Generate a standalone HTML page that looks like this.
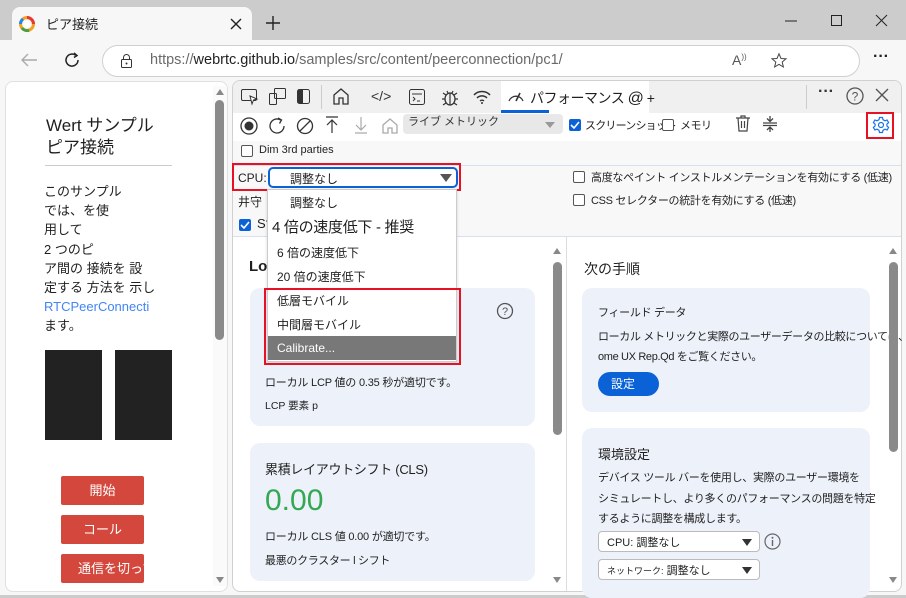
<!DOCTYPE html>
<html><head><meta charset="utf-8"><style>
*{box-sizing:border-box;margin:0;padding:0}
body{width:906px;height:595px;overflow:hidden;background:#cccccc;font-family:"Liberation Sans","Noto Sans CJK JP",sans-serif;font-size:12px;color:#1f1f1f;position:relative}
.a{position:absolute}
.t{white-space:nowrap}
svg{position:absolute;overflow:visible}
.cb{position:absolute;width:12px;height:12px;border:1px solid #555;border-radius:2px;background:#fff}
.cbc{position:absolute;width:12px;height:12px;border-radius:2px;background:#0b62d6}
.red{position:absolute;border:2px solid #e81123}
.card{position:absolute;background:#edf2fa;border-radius:10px}
.btn{position:absolute;background:#d4473c;color:#fff;border-radius:2px;text-align:center;font-size:13px;line-height:30px}
</style></head><body>
<div class="a" style="left:12px;top:7px;width:240px;height:34px;background:#f7f7f7;border-radius:8px 8px 0 0"></div>
<svg style="left:19px;top:16px" width="16" height="16" viewBox="0 0 16 16"><circle cx="8" cy="8" r="6.5" fill="none" stroke="#f4a020" stroke-width="3"/><path d="M8 1.5A6.5 6.5 0 0 1 14.5 8" stroke="#e53935" stroke-width="3" fill="none"/><path d="M3 12A6.5 6.5 0 0 0 10 14.3" stroke="#43a047" stroke-width="3" fill="none"/><path d="M1.5 8A6.5 6.5 0 0 1 4 3" stroke="#1e88e5" stroke-width="3" fill="none"/><circle cx="8" cy="8" r="3" fill="#fff"/></svg>
<div class="a t" style="left:46px;top:14px;font-size:13px">ピア接続</div>
<svg style="left:231px;top:19px" width="10" height="10"><path d="M0 0L10 10M10 0L0 10" stroke="#222" stroke-width="1.4"/></svg>
<svg style="left:266px;top:16px" width="14" height="14"><path d="M7 0V14M0 7H14" stroke="#222" stroke-width="1.4"/></svg>
<svg style="left:785px;top:20px" width="12" height="2"><path d="M0 1H12" stroke="#222"/></svg>
<svg style="left:831px;top:15px" width="11" height="11"><rect x=".5" y=".5" width="10" height="10" fill="none" stroke="#222"/></svg>
<svg style="left:876px;top:15px" width="11" height="11"><path d="M0 0L11 11M11 0L0 11" stroke="#222"/></svg>
<div class="a" style="left:0;top:40px;width:906px;height:40px;background:#f7f7f7"></div>
<svg style="left:20px;top:53px" width="18" height="14"><path d="M17 7H2M8 1L2 7L8 13" stroke="#aaa" stroke-width="1.4" fill="none"/></svg>
<svg style="left:64px;top:52px" width="16" height="16" viewBox="0 0 16 16"><path d="M14 8A6 6 0 1 1 11.5 3.2" stroke="#222" stroke-width="1.5" fill="none"/><path d="M10 1L13 3.5L10 5.5" stroke="#222" stroke-width="1.5" fill="none"/></svg>
<div class="a" style="left:102px;top:45px;width:758px;height:32px;background:#fff;border:1px solid #d0d0d0;border-radius:16px"></div>
<svg style="left:121px;top:54px" width="11" height="14"><rect x=".5" y="5.5" width="10" height="8" rx="1" fill="none" stroke="#333"/><path d="M2.5 5.5V3.5a3 3 0 0 1 6 0V5.5" fill="none" stroke="#333"/><circle cx="5.5" cy="9.5" r="1" fill="#333"/></svg>
<div class="a t" style="left:150px;top:52px;font-size:14.5px;color:#222"><span style="color:#6a6a6a">https://</span>webrtc.github.io<span style="color:#6a6a6a">/samples/src/content/peerconnection/pc1/</span></div>
<div class="a t" style="left:732px;top:52px;font-size:14px;color:#555">A<sup style="font-size:8px">))</sup></div>
<svg style="left:771px;top:53px" width="16" height="15" viewBox="0 0 16 15"><path d="M8 .8L10 5.5L15 5.8L11.2 9L12.4 14L8 11.3L3.6 14L4.8 9L1 5.8L6 5.5Z" fill="none" stroke="#444"/></svg>
<div class="a t" style="left:873px;top:48px;font-size:16px;font-weight:bold;color:#222">···</div>
<div class="a" style="left:0;top:80px;width:906px;height:515px;background:#f7f7f7"></div>
<div class="a" style="left:5px;top:81px;width:223px;height:511px;background:#fff;border:1px solid #e0e0e0;border-radius:8px"></div>
<div class="a" style="left:213px;top:86px;width:14px;height:500px;background:#fafafa"></div>
<svg style="left:215px;top:88px" width="10" height="8"><path d="M5 1L9 7H1Z" fill="#888"/></svg>
<div class="a" style="left:215px;top:100px;width:9px;height:240px;background:#8a8a8a;border-radius:5px"></div>
<svg style="left:215px;top:576px" width="10" height="8"><path d="M5 7L9 1H1Z" fill="#888"/></svg>
<div class="a t" style="left:46px;top:115px;font-size:17px;line-height:22px">Wert サンプル<br>ピア接続</div>
<div class="a" style="left:45px;top:165px;width:127px;height:1px;background:#ccc"></div>
<div class="a t" style="left:44px;top:182px;font-size:13px;line-height:19.2px">このサンプル<br>では、を使<br>用して<br>2 つのピ<br>ア間の 接続を 設<br>定する 方法を 示し<br><span style="color:#4285f4">RTCPeerConnecti</span><br>ます。</div>
<div class="a" style="left:45px;top:350px;width:57px;height:90px;background:#222"></div>
<div class="a" style="left:115px;top:350px;width:57px;height:90px;background:#222"></div>
<div class="btn" style="left:61px;top:476px;width:83px;height:29px">開始</div>
<div class="btn" style="left:61px;top:515px;width:83px;height:29px">コール</div>
<div class="btn t" style="left:61px;top:554px;width:83px;height:29px;overflow:hidden;text-align:left;padding-left:17px">通信を切ってく</div>
<div class="a" style="left:232px;top:80px;width:670px;height:512px;background:#fff;border:1px solid #d0d0d0;border-radius:8px;overflow:hidden">
 <div class="a" style="left:0;top:0;width:670px;height:32px;background:#f0f0f0"></div>
 <div class="a" style="left:0;top:60px;width:670px;height:96px;background:#f8f8f8"></div>
 <div class="a" style="left:0;top:84px;width:670px;height:1px;background:#d5e0f0"></div>
 <div class="a" style="left:0;top:155px;width:670px;height:1px;background:#d5e0f0"></div>
 <div class="a" style="left:333px;top:156px;width:1px;height:360px;background:#ddd"></div>
 <div class="a" style="left:268px;top:0;width:148px;height:32px;background:#fff"></div>
 <div class="a" style="left:268px;top:29px;width:48px;height:3px;background:#0b62d6"></div>
 <div class="a" style="left:88px;top:4px;width:1px;height:24px;background:#ccc"></div>
 <div class="a" style="left:573px;top:4px;width:1px;height:24px;background:#ccc"></div>
</div>
<svg style="left:241px;top:89px" width="18" height="16"><rect x=".5" y=".5" width="15" height="11" rx="1.5" fill="none" stroke="#333"/><path d="M9 7L16 10L12.5 11L11 15Z" fill="#fff" stroke="#333"/></svg>
<svg style="left:269px;top:88px" width="18" height="18"><rect x=".5" y="5.5" width="7" height="11" rx="1" fill="none" stroke="#333"/><rect x="5.5" y=".5" width="11" height="10" rx="1" fill="none" stroke="#333"/></svg>
<svg style="left:297px;top:89px" width="14" height="16"><rect x=".5" y=".5" width="12" height="14" rx="2" fill="none" stroke="#333"/><rect x="1" y="1" width="5" height="13" fill="#333"/></svg>
<svg style="left:333px;top:88px" width="16" height="17"><path d="M1 7L8 1L15 7V16H10V10H6V16H1Z" fill="none" stroke="#333" stroke-width="1.3"/></svg>
<div class="a t" style="left:371px;top:88px;font-size:14px;color:#333">&lt;/&gt;</div>
<svg style="left:409px;top:89px" width="16" height="16"><rect x=".5" y=".5" width="15" height="15" rx="2" fill="none" stroke="#333"/><path d="M3 5H13M4 8L6 10L4 12M8 12H11" stroke="#333" fill="none"/></svg>
<svg style="left:441px;top:88px" width="18" height="18"><ellipse cx="9" cy="11" rx="5" ry="6" fill="none" stroke="#333" stroke-width="1.3"/><path d="M9 5V17M4 11H1M14 11H17M5 7L2 5M13 7L16 5M5 15L2 17M13 15L16 17M6 3L7 5M12 3L11 5" stroke="#333" stroke-width="1.2"/></svg>
<svg style="left:473px;top:90px" width="18" height="14"><path d="M1 5A11 11 0 0 1 17 5M4 8A7 7 0 0 1 14 8M7 11A3 3 0 0 1 11 11" fill="none" stroke="#333" stroke-width="1.5"/><circle cx="9" cy="13" r="1" fill="#333"/></svg>
<svg style="left:507px;top:89px" width="18" height="14"><path d="M2 12A7.5 7.5 0 0 1 16 12" fill="none" stroke="#333" stroke-width="1.3"/><path d="M9 12L13 4" stroke="#333" stroke-width="1.6"/></svg>
<div class="a t" style="left:530px;top:88px;font-size:14px;letter-spacing:-0.5px;color:#1f1f1f">パフォーマンス <span style="font-size:16px">@</span> +</div>
<div class="a t" style="left:818px;top:83px;font-size:16px;font-weight:bold;color:#333">···</div>
<svg style="left:846px;top:87px" width="18" height="18"><circle cx="9" cy="9" r="8" fill="none" stroke="#555" stroke-width="1.3"/><text x="9" y="13.5" font-size="12" text-anchor="middle" fill="#555" font-family="Liberation Sans">?</text></svg>
<svg style="left:875px;top:88px" width="14" height="14"><path d="M1 1L13 13M13 1L1 13" stroke="#555" stroke-width="1.4"/></svg>
<svg style="left:240px;top:117px" width="18" height="18"><circle cx="9" cy="9" r="8" fill="none" stroke="#333" stroke-width="1.3"/><circle cx="9" cy="9" r="4.5" fill="#333"/></svg>
<svg style="left:268px;top:117px" width="18" height="18"><path d="M16 9A7 7 0 1 1 12.5 2.9" fill="none" stroke="#333" stroke-width="1.3"/><path d="M10 1L13.5 3L11.5 6.5" fill="none" stroke="#333" stroke-width="1.3"/></svg>
<svg style="left:296px;top:117px" width="18" height="18"><circle cx="9" cy="9" r="7.5" fill="none" stroke="#333" stroke-width="1.3"/><path d="M4 14L14 4" stroke="#333" stroke-width="1.3"/></svg>
<svg style="left:325px;top:116px" width="14" height="18"><path d="M1 1H13M7 4V17M2 9L7 4L12 9" fill="none" stroke="#333" stroke-width="1.2"/></svg>
<svg style="left:354px;top:116px" width="14" height="18"><path d="M1 17H13M7 1V14M2 9L7 14L12 9" fill="none" stroke="#aaa" stroke-width="1.2"/></svg>
<svg style="left:382px;top:118px" width="16" height="16"><path d="M1 7L8 1L15 7V15H10V10H6V15H1Z" fill="none" stroke="#aaa" stroke-width="1.3"/></svg>
<div class="a" style="left:403px;top:114px;width:160px;height:20px;background:#e8e8e8;border-radius:4px"></div>
<div class="a t" style="left:408px;top:113px;font-size:11px;color:#333">ライブ メトリック</div>
<svg style="left:545px;top:122px" width="10" height="7"><path d="M0 0H10L5 6Z" fill="#999"/></svg>
<div class="cbc" style="left:569px;top:119px"></div>
<svg style="left:571px;top:121px" width="8" height="8"><path d="M0 4L3 7L8 1" stroke="#fff" stroke-width="1.6" fill="none"/></svg>
<div class="a t" style="left:585px;top:117px;font-size:11px;letter-spacing:-0.8px">スクリーンショット</div>
<div class="cb" style="left:662px;top:119px"></div>
<div class="a t" style="left:680px;top:117px;font-size:11px;letter-spacing:-0.5px">メモリ</div>
<svg style="left:735px;top:115px" width="16" height="18"><path d="M1 3H15M6 3V1H10V3M3 3L4 16H12L13 3M6.5 6V13M9.5 6V13" fill="none" stroke="#444" stroke-width="1.2"/></svg>
<svg style="left:763px;top:115px" width="14" height="18"><path d="M0 8H14M0 10.5H14M7 1V6M4 3.5L7 6.5L10 3.5M7 17V12.5M4 15L7 12L10 15" fill="none" stroke="#444" stroke-width="1.3"/></svg>
<svg style="left:872px;top:116px" width="18" height="18" viewBox="0 0 18 18"><path d="M7.5 1.5H10.5L11 3.7L13 4.8L15.1 4L16.6 6.6L14.9 8.1V9.9L16.6 11.4L15.1 14L13 13.2L11 14.3L10.5 16.5H7.5L7 14.3L5 13.2L2.9 14L1.4 11.4L3.1 9.9V8.1L1.4 6.6L2.9 4L5 4.8L7 3.7Z" fill="none" stroke="#1a73e8" stroke-width="1.2"/><circle cx="9" cy="9" r="2.5" fill="none" stroke="#1a73e8" stroke-width="1.2"/></svg>
<div class="red" style="left:866px;top:112px;width:28px;height:27px"></div>
<div class="cb" style="left:241px;top:145px"></div>
<div class="a t" style="left:259px;top:144px;font-size:11px">Dim 3rd parties</div>
<div class="a t" style="left:238px;top:171px;font-size:12px">CPU:</div>
<div class="a" style="left:268px;top:167px;width:190px;height:21px;border:2px solid #0b62d6;border-radius:5px;background:#fff"></div>
<div class="a t" style="left:290px;top:170px;font-size:12px">調整なし</div>
<svg style="left:440px;top:174px" width="12" height="8"><path d="M0 0H12L6 8Z" fill="#555"/></svg>
<div class="red" style="left:232px;top:163px;width:229px;height:28px"></div>
<div class="a t" style="left:238px;top:193px;font-size:12px">井守</div>
<div class="cbc" style="left:239px;top:219px"></div>
<svg style="left:241px;top:221px" width="8" height="8"><path d="M0 4L3 7L8 1" stroke="#fff" stroke-width="1.6" fill="none"/></svg>
<div class="a t" style="left:257px;top:216px;font-size:13px">S?</div>
<div class="cb" style="left:573px;top:171px"></div>
<div class="a t" style="left:591px;top:169px;font-size:11px;letter-spacing:-0.3px">高度なペイント インストルメンテーションを有効にする (低速)</div>
<div class="cb" style="left:573px;top:194px"></div>
<div class="a t" style="left:591px;top:192px;font-size:11px;letter-spacing:-0.3px">CSS セレクターの統計を有効にする (低速)</div>
<div class="a t" style="left:249px;top:258px;font-size:15px;font-weight:bold">Lo</div>
<div class="card" style="left:250px;top:288px;width:285px;height:138px"></div>
<svg style="left:496px;top:302px" width="18" height="18"><circle cx="9" cy="9" r="7.5" fill="none" stroke="#555" stroke-width="1.3"/><text x="9" y="13" font-size="11" text-anchor="middle" fill="#555" font-family="Liberation Sans">?</text></svg>
<div class="a t" style="left:265px;top:374px;font-size:11px;letter-spacing:-0.2px">ローカル LCP 値の 0.35 秒が適切です。</div>
<div class="a t" style="left:265px;top:398px;font-size:10.5px">LCP 要素 p</div>
<div class="card" style="left:250px;top:443px;width:285px;height:138px"></div>
<div class="a t" style="left:265px;top:459px;font-size:13px;letter-spacing:-0.3px">累積レイアウトシフト (CLS)</div>
<div class="a t" style="left:265px;top:484px;font-size:30px;color:#34a853">0.00</div>
<div class="a t" style="left:265px;top:528px;font-size:11px;letter-spacing:-0.2px">ローカル CLS 値 0.00 が適切です。</div>
<div class="a t" style="left:265px;top:552px;font-size:11px;letter-spacing:-0.3px">最悪のクラスター l シフト</div>
<svg style="left:552px;top:247px" width="10" height="8"><path d="M5 1L9 7H1Z" fill="#888"/></svg>
<div class="a" style="left:553px;top:262px;width:9px;height:173px;background:#8a8a8a;border-radius:5px"></div>
<svg style="left:552px;top:576px" width="10" height="8"><path d="M5 7L9 1H1Z" fill="#888"/></svg>
<div class="a t" style="left:584px;top:259px;font-size:14px">次の手順</div>
<div class="card" style="left:582px;top:288px;width:288px;height:124px"></div>
<div class="a t" style="left:598px;top:304px;font-size:11px;letter-spacing:-0.3px">フィールド データ</div>
<div class="a t" style="left:598px;top:327px;font-size:11px;line-height:20px;letter-spacing:-0.35px">ローカル メトリックと実際のユーザーデータの比較については、Chr<br>ome UX Rep.Qd をご覧ください。</div>
<div class="a" style="left:598px;top:372px;width:61px;height:24px;background:#0b62d6;border-radius:12px;color:#fff;font-size:12px;line-height:24px;padding-left:13px">設定</div>
<div class="card" style="left:582px;top:428px;width:288px;height:170px"></div>
<div class="a t" style="left:598px;top:444px;font-size:13px">環境設定</div>
<div class="a t" style="left:598px;top:468px;font-size:11px;line-height:20.5px;letter-spacing:-0.3px">デバイス ツール バーを使用し、実際のユーザー環境を<br>シミュレートし、より多くのパフォーマンスの問題を特定<br>するように調整を構成します。</div>
<div class="a" style="left:598px;top:531px;width:162px;height:21px;background:#fff;border:1px solid #bbb;border-radius:4px"></div>
<div class="a t" style="left:607px;top:534px;font-size:11px">CPU: 調整なし</div>
<svg style="left:742px;top:539px" width="10" height="7"><path d="M0 0H10L5 7Z" fill="#333"/></svg>
<svg style="left:764px;top:533px" width="17" height="17"><circle cx="8.5" cy="8.5" r="7.5" fill="none" stroke="#666" stroke-width="1.2"/><path d="M8.5 7V13" stroke="#666" stroke-width="1.4"/><circle cx="8.5" cy="4.7" r="1" fill="#666"/></svg>
<div class="a" style="left:598px;top:559px;width:162px;height:21px;background:#fff;border:1px solid #bbb;border-radius:4px"></div>
<div class="a t" style="left:607px;top:562px;font-size:11px"><span style="font-size:9px">ネットワーク:</span> 調整なし</div>
<svg style="left:742px;top:567px" width="10" height="7"><path d="M0 0H10L5 7Z" fill="#333"/></svg>
<svg style="left:888px;top:247px" width="10" height="8"><path d="M5 1L9 7H1Z" fill="#888"/></svg>
<div class="a" style="left:889px;top:262px;width:9px;height:190px;background:#8a8a8a;border-radius:5px"></div>
<svg style="left:888px;top:576px" width="10" height="8"><path d="M5 7L9 1H1Z" fill="#888"/></svg>
<div class="a" style="left:267px;top:189px;width:190px;height:173px;background:#fff;border:1px solid #ccc;box-shadow:0 1px 3px rgba(0,0,0,.15)"></div>
<div class="a t" style="left:290px;top:194px;font-size:12px">調整なし</div>
<div class="a t" style="left:272px;top:216px;font-size:15px;letter-spacing:-0.3px">4 倍の速度低下 - 推奨</div>
<div class="a t" style="left:277px;top:244px;font-size:12px">6 倍の速度低下</div>
<div class="a t" style="left:277px;top:268px;font-size:12px">20 倍の速度低下</div>
<div class="a t" style="left:277px;top:292px;font-size:12px">低層モバイル</div>
<div class="a t" style="left:277px;top:316px;font-size:12px">中間層モバイル</div>
<div class="a" style="left:268px;top:336px;width:188px;height:24px;background:#787878"></div>
<div class="a t" style="left:277px;top:341px;font-size:12px;color:#fff">Calibrate...</div>
<div class="red" style="left:264px;top:288px;width:197px;height:77px"></div>
</body></html>
